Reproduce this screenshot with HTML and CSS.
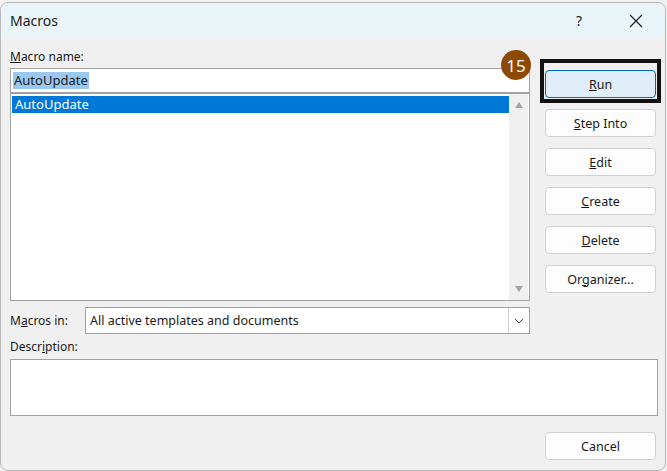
FILE: index.html
```html
<!DOCTYPE html>
<html>
<head>
<meta charset="utf-8">
<link rel="stylesheet" href="styles.css">
</head>
<body>
<div class="dialog">
  <div class="titlebar">
    <span class="title">Macros</span>
    <span class="help">?</span>
    <svg class="close" width="14" height="14" viewBox="0 0 14 14"><path d="M1 1 L13 13 M13 1 L1 13" stroke="#222" stroke-width="1.2" fill="none"/></svg>
  </div>
  <div class="content">
    <div class="top">
      <div class="left">
        <div class="label name-label"><u>M</u>acro name:</div>
        <div class="input"><span class="sel-text">AutoUpdate</span></div>
        <div class="list">
          <div class="items">
            <div class="item selected">AutoUpdate</div>
          </div>
          <div class="scrollbar">
            <svg width="10" height="8" viewBox="0 0 10 8"><path d="M5 1 L9 7 L1 7 Z" fill="#a3a3a3"/></svg>
            <svg width="10" height="8" viewBox="0 0 10 8"><path d="M1 1 L9 1 L5 7 Z" fill="#a3a3a3"/></svg>
          </div>
        </div>
        <div class="combo-row">
          <div class="label">M<u>a</u>cros in:</div>
          <div class="combo">
            <span class="combo-text">All active templates and documents</span>
            <div class="combo-btn"><svg width="10" height="6" viewBox="0 0 10 6"><path d="M1 1 L5 5 L9 1" stroke="#444" stroke-width="1" fill="none"/></svg></div>
          </div>
        </div>
      </div>
      <div class="right">
        <div class="btn-wrap">
          <button class="btn default"><u>R</u>un</button>
          <div class="focus-frame"></div>
          <div class="badge">15</div>
        </div>
        <button class="btn"><u>S</u>tep Into</button>
        <button class="btn"><u>E</u>dit</button>
        <button class="btn"><u>C</u>reate</button>
        <button class="btn"><u>D</u>elete</button>
        <button class="btn">Or<u>g</u>anizer...</button>
      </div>
    </div>
    <div class="label desc-label">Descr<u>i</u>ption:</div>
    <div class="desc"></div>
    <div class="footer">
      <button class="btn">Cancel</button>
    </div>
  </div>
</div>
</body>
</html>
```
FILE: styles.css
```css
* { box-sizing: border-box; }
html, body {
  margin: 0;
  padding: 0;
  background: #f0f0f0;
  font-family: "Noto Sans", "Open Sans", sans-serif;
  font-size: 12px;
  color: #1a1a1a;
}
.dialog {
  margin-top: 2px;
  width: 666px;
  height: 469px;
  border: 1px solid #b9b9b9;
  border-radius: 8px;
  background: #f0f0f0;
  overflow: hidden;
}
.titlebar {
  height: 35px;
  background: #e8f4f7;
  display: flex;
  align-items: center;
  padding-left: 9px;
}
.title {
  font-size: 14px;
  flex: 1;
  color: #1a1a1a;
}
.help {
  font-size: 14px;
  margin-right: 47px;
  color: #222;
}
.close {
  margin-right: 22px;
}
.content {
  padding: 0 8px 0 9px;
}
.top {
  display: flex;
  gap: 15px;
}
.left {
  width: 520px;
  display: flex;
  flex-direction: column;
}
.label {
  line-height: 16px;
}
.name-label {
  margin-top: 11px;
  margin-bottom: 3px;
}
.input {
  height: 25px;
  background: #fff;
  border: 1px solid #a2a2a2;
  display: flex;
  align-items: center;
  padding-left: 2px;
  font-size: 13px;
}
.sel-text {
  background: #99c9ef;
  line-height: 17px;
  padding: 0 1px;
}
.list {
  height: 208px;
  background: #fff;
  border: 1px solid #a2a2a2;
  display: flex;
  padding: 2px 1px 1px 1px;
}
.items {
  flex: 1;
}
.item {
  height: 17px;
  line-height: 17px;
  padding-left: 3px;
  font-size: 13px;
}
.item.selected {
  background: #0078d7;
  color: #fff;
}
.scrollbar {
  width: 19px;
  margin-top: -2px;
  margin-bottom: -1px;
  background: #f0f0f0;
  display: flex;
  flex-direction: column;
  justify-content: space-between;
  align-items: center;
  padding: 7px 0 7px 0;
}
.combo-row {
  margin-top: 6px;
  display: flex;
  align-items: center;
  height: 27px;
}
.combo-row .label {
  width: 75px;
}
.combo {
  flex: 1;
  height: 27px;
  background: #fff;
  border: 1px solid #a2a2a2;
  display: flex;
  align-items: center;
  padding-left: 4px;
}
.combo-text {
  flex: 1;
  font-size: 12.5px;
}
.combo-btn {
  width: 21px;
  height: 25px;
  border-left: 1px solid #cfcfcf;
  display: flex;
  align-items: center;
  justify-content: center;
}
.right {
  width: 111px;
  padding-top: 32px;
  display: flex;
  flex-direction: column;
  gap: 11px;
}
.btn {
  width: 111px;
  height: 28px;
  background: #fdfdfd;
  border: 1px solid #d0d0d0;
  border-radius: 4px;
  font-family: "Noto Sans", "Open Sans", sans-serif;
  font-size: 12.5px;
  color: #1a1a1a;
  padding: 0;
}
.btn.default {
  background: #e0eef9;
  border: 1px solid #0067c0;
}
.btn-wrap {
  position: relative;
  height: 28px;
}
.focus-frame {
  position: absolute;
  left: -5px;
  top: -11px;
  width: 121px;
  height: 44px;
  border: 4px solid #111;
}
.badge {
  position: absolute;
  left: -44px;
  top: -20px;
  width: 30px;
  height: 30px;
  border-radius: 50%;
  background: #8d4804;
  color: #fff;
  font-size: 17px;
  display: flex;
  align-items: center;
  justify-content: center;
  line-height: 1;
}
.desc-label {
  margin-top: 5px;
  margin-bottom: 4px;
}
.desc {
  height: 57px;
  width: 648px;
  background: #fff;
  border: 1px solid #a2a2a2;
}
.footer {
  display: flex;
  justify-content: flex-end;
  margin-top: 16px;
  padding-right: 1px;
}
```
